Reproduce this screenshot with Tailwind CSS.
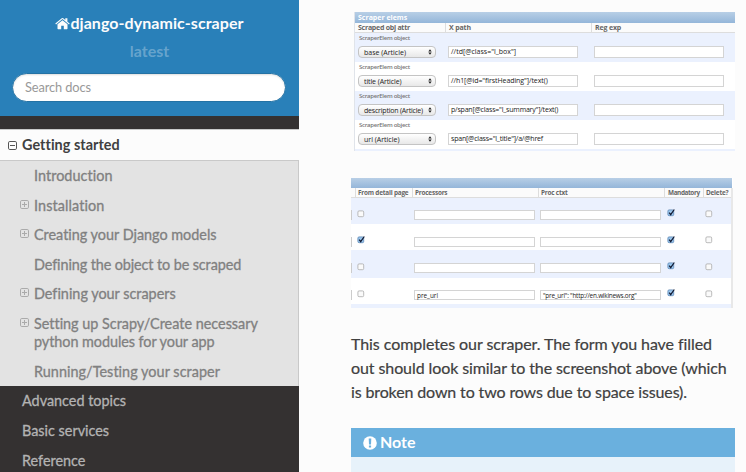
<!DOCTYPE html>
<html lang="en">
<head>
<meta charset="utf-8">
<title>django-dynamic-scraper</title>
<script src="https://cdn.jsdelivr.net/npm/@tailwindcss/browser@4"></script>
</head>
<body class="flex h-[472px] w-[746px] overflow-hidden bg-[#fcfcfc] font-['Lato',sans-serif] text-[#404040] [font-variant-ligatures:none]">
<svg class="hidden">
  <symbol id="plus" viewBox="0 0 9 9"><rect x=".5" y=".5" width="8" height="8" rx="1.3" fill="none" stroke="currentColor"/><path d="M2 4.5H7M4.5 2V7" stroke="currentColor"/></symbol>
  <symbol id="minus" viewBox="0 0 9 9"><rect x=".5" y=".5" width="8" height="8" rx="1.3" fill="none" stroke="currentColor"/><path d="M2 4.5H7" stroke="currentColor"/></symbol>
  <symbol id="box" viewBox="0 0 8 8"><rect x=".9" y=".9" width="5.8" height="5.8" rx="1.2" fill="#fafafa" stroke="#aaa" stroke-width=".8"/></symbol>
  <symbol id="checked" viewBox="0 0 8 8"><rect x=".9" y=".9" width="5.8" height="5.8" rx="1.2" fill="#9cc8ef" stroke="#5c86b4" stroke-width=".8"/><path d="M2.2 3.6L3.7 5.6L7.3 .5" fill="none" stroke="#111a33" stroke-width="1.3"/></symbol>
  <symbol id="arrows" viewBox="0 0 4 6"><path d="M.3 2.4L2 .2L3.7 2.4ZM.3 3.6H3.7L2 5.8Z" fill="#222"/></symbol>
</svg>

<nav class="flex w-[299px] shrink-0 flex-col bg-[#343131]">
  <header class="flex h-[116px] shrink-0 flex-col items-center bg-[#2980b9] pt-[11px]">
    <a class="flex h-[24px] items-center text-[16px] font-bold leading-[24px] text-[#fcfcfc]">
      <svg class="h-[13px] w-[15px]" viewBox="0 0 15 13" fill="#fcfcfc"><path d="M7.5 3.2L2.5 7.3V11.6Q2.5 12.2 3.1 12.2H6.2V8.7H8.8V12.2H11.9Q12.5 12.2 12.5 11.6V7.3Z"/><path d="M.3 6.6L6.8 1.2Q7.5.7 8.2 1.2L10.3 3V1.2H12.4V4.7L14.7 6.6L14 7.4L7.5 2.1L1 7.4Z"/></svg><span class="tracking-[0.06px]">django-dynamic-scraper</span>
    </a>
    <div class="mt-[4px] text-[16px] font-bold leading-[24px] text-white/30">latest</div>
    <div class="mt-[10px] mr-px flex h-[29px] w-[274px] items-center rounded-full border border-[#2472a4] bg-white pl-[12px] text-[12.8px] text-[#999] tracking-[-0.1px] shadow-[inset_0_1px_2px_#ddd]">Search docs</div>
  </header>
  <ul class="mt-[13px] text-[14.4px] leading-[18px] text-[#b3b3b3] [-webkit-text-stroke:0.3px]">
    <li>
      <a class="flex h-[32px] items-center border-y border-[#c9c9c9] bg-[#fcfcfc] pl-[8px] font-bold text-[#404040] [-webkit-text-stroke:0px] tracking-[0.05px]"><svg class="mr-[5px] h-[9px] w-[9px] text-[#555]"><use href="#minus"/></svg>Getting started</a>
      <ul class="border-r border-[#c9c9c9] bg-[#e3e3e3] pt-[0.3px] pr-[30px] pl-[20px] text-[#808080]">
        <li class="py-[5.8px] pl-[14px] tracking-[0.05px]">Introduction</li>
        <li class="flex py-[5.8px] tracking-[0.1px]"><svg class="mt-[3px] mr-[5px] h-[9px] w-[9px] shrink-0 text-[#aaa]"><use href="#plus"/></svg>Installation</li>
        <li class="flex py-[5.8px]"><svg class="mt-[3px] mr-[5px] h-[9px] w-[9px] shrink-0 text-[#aaa]"><use href="#plus"/></svg>Creating your Django models</li>
        <li class="py-[5.8px] pl-[14px] tracking-[-0.1px]">Defining the object to be scraped</li>
        <li class="flex py-[5.8px]"><svg class="mt-[3px] mr-[5px] h-[9px] w-[9px] shrink-0 text-[#aaa]"><use href="#plus"/></svg>Defining your scrapers</li>
        <li class="flex py-[5.8px]"><svg class="mt-[3px] mr-[5px] h-[9px] w-[9px] shrink-0 text-[#aaa]"><use href="#plus"/></svg><span>Setting up Scrapy/Create necessary<br><span class="tracking-[-0.05px]">python modules for your app</span></span></li>
        <li class="h-[29.3px] pt-[5.8px] pl-[14px] tracking-[0.05px]">Running/Testing your scraper</li>
      </ul>
    </li>
    <li class="py-[6px] pl-[22px]">Advanced topics</li>
    <li class="py-[6px] pl-[22px]">Basic services</li>
    <li class="py-[6px] pl-[22px]">Reference</li>
  </ul>
</nav>

<main class="relative grow pl-[52px] pt-[12px]">
  <section class="ml-[3px] h-[139px] w-[381px] border-l border-[#e0e4ea] bg-white font-['Open_Sans',sans-serif] text-[7px] leading-[9px] text-[#222]">
    <h2 class="h-[11px] bg-linear-to-b from-[#b8cfe6] to-[#94b6d9] pl-[3px] font-bold leading-[11px] text-white">Scraper elems</h2>
    <div class="grid h-[10px] grid-cols-[90px_146px_1fr] border-b border-[#ddd] bg-[#fbfbfb] font-bold tracking-[-0.15px] text-[#666]">
      <div class="pl-[3px] leading-[10px] tracking-[-0.25px]">Scraped obj attr</div><div class="border-l border-[#ddd] pl-[3px] leading-[10px]">X path</div><div class="border-l border-[#ddd] pl-[3px] leading-[10px]">Reg exp</div>
    </div>
    <div class="h-[29px] bg-[#ebf1fe]">
      <div class="h-[13px] pt-[1px] pl-[4px] text-[6px] font-semibold tracking-[-0.27px] text-[#777]">ScraperElem object</div>
      <div class="flex"><div class="mr-[12px] ml-[3px] flex h-[12px] w-[78px] items-center justify-between rounded-[4px] border border-[#c4c4c4] bg-linear-to-b from-white to-[#e8e8e8] pr-[3px] pl-[5px]"><span>base (Article)</span><svg class="h-[6px] w-[4px]"><use href="#arrows"/></svg></div><div class="mr-[16px] h-[12px] w-[130px] border border-[#d4d4d4] bg-white pl-[2px]">//td[@class="l_box"]</div><div class="h-[12px] w-[130px] border border-[#d4d4d4] bg-white"></div></div>
    </div>
    <div class="h-[29px]">
      <div class="h-[13px] pt-[1px] pl-[4px] text-[6px] font-semibold tracking-[-0.27px] text-[#777]">ScraperElem object</div>
      <div class="flex"><div class="mr-[12px] ml-[3px] flex h-[12px] w-[78px] items-center justify-between rounded-[4px] border border-[#c4c4c4] bg-linear-to-b from-white to-[#e8e8e8] pr-[3px] pl-[5px]"><span class="tracking-[-0.1px]">title (Article)</span><svg class="h-[6px] w-[4px]"><use href="#arrows"/></svg></div><div class="mr-[16px] h-[12px] w-[130px] border border-[#d4d4d4] bg-white pl-[2px] tracking-[-0.08px]">//h1[@id="firstHeading"]/text()</div><div class="h-[12px] w-[130px] border border-[#d4d4d4] bg-white"></div></div>
    </div>
    <div class="h-[29px] bg-[#ebf1fe]">
      <div class="h-[13px] pt-[1px] pl-[4px] text-[6px] font-semibold tracking-[-0.27px] text-[#777]">ScraperElem object</div>
      <div class="flex"><div class="mr-[12px] ml-[3px] flex h-[12px] w-[78px] items-center justify-between rounded-[4px] border border-[#c4c4c4] bg-linear-to-b from-white to-[#e8e8e8] pr-[3px] pl-[5px]"><span class="whitespace-nowrap tracking-[-0.2px]">description (Article)</span><svg class="h-[6px] w-[4px]"><use href="#arrows"/></svg></div><div class="mr-[16px] h-[12px] w-[130px] border border-[#d4d4d4] bg-white pl-[2px] tracking-[-0.2px]">p/span[@class="l_summary"]/text()</div><div class="h-[12px] w-[130px] border border-[#d4d4d4] bg-white"></div></div>
    </div>
    <div class="h-[29px]">
      <div class="h-[13px] pt-[1px] pl-[4px] text-[6px] font-semibold tracking-[-0.27px] text-[#777]">ScraperElem object</div>
      <div class="flex"><div class="mr-[12px] ml-[3px] flex h-[12px] w-[78px] items-center justify-between rounded-[4px] border border-[#c4c4c4] bg-linear-to-b from-white to-[#e8e8e8] pr-[3px] pl-[5px]"><span>url (Article)</span><svg class="h-[6px] w-[4px]"><use href="#arrows"/></svg></div><div class="mr-[16px] h-[12px] w-[130px] border border-[#d4d4d4] bg-white pl-[2px] tracking-[-0.2px]">span[@class="l_title"]/a/@href</div><div class="h-[12px] w-[130px] border border-[#d4d4d4] bg-white"></div></div>
    </div>
    <div class="h-[2px] bg-[#ebf1fe]"></div>
  </section>

  <section class="mt-[27px] h-[130px] w-[382px] bg-white font-['Open_Sans',sans-serif] text-[6.4px] leading-[10px] text-[#222]">
    <div class="h-[10px] w-[381px] bg-linear-to-b from-[#b8cfe6] to-[#94b6d9]"></div>
    <div class="border-r-2 border-[#e8e8e8]">
      <div class="grid h-[10px] grid-cols-[4px_57px_126px_126px_39px_1fr] border-b border-[#ddd] bg-[#fbfbfb] font-bold tracking-[-0.2px] text-[#666]">
        <div></div><div class="border-l border-[#ddd] pl-[2px] whitespace-nowrap">From detail page</div><div class="border-l border-[#ddd] pl-[2px]">Processors</div><div class="border-l border-[#ddd] pl-[2px]">Proc ctxt</div><div class="border-l border-[#ddd] pl-[3px] tracking-[-0.4px]">Mandatory</div><div class="border-l border-[#ddd] pl-[2px]">Delete?</div>
      </div>
      <div class="flex h-[26px] bg-[#ebf1fe] pt-[11px]"><div class="mt-[1px] h-[10px] w-px bg-[#ccc]"></div><svg class="ml-[5px] mt-[1px] h-[8px] w-[8px]"><use href="#box"/></svg><div class="mt-[1px] ml-[49px] h-[10px] w-[121px] border border-[#d4d4d4] bg-white"></div><div class="mt-[1px] ml-[5px] h-[10px] w-[121px] border border-[#d4d4d4] bg-white"></div><svg class="ml-[6px] h-[8px] w-[8px]"><use href="#checked"/></svg><svg class="ml-[30px] mt-[1px] h-[8px] w-[8px]"><use href="#box"/></svg></div>
      <div class="flex h-[26px] pt-[11px]"><div class="mt-[2px] h-[10px] w-px bg-[#ccc]"></div><svg class="ml-[5px] mt-[1px] h-[8px] w-[8px]"><use href="#checked"/></svg><div class="mt-[2px] ml-[49px] h-[10px] w-[121px] border border-[#d4d4d4] bg-white"></div><div class="mt-[2px] ml-[5px] h-[10px] w-[121px] border border-[#d4d4d4] bg-white"></div><svg class="ml-[6px] mt-[1px] h-[8px] w-[8px]"><use href="#checked"/></svg><svg class="ml-[30px] mt-[1px] h-[8px] w-[8px]"><use href="#box"/></svg></div>
      <div class="flex h-[28px] bg-[#ebf1fe] pt-[12px]"><div class="mt-[1px] h-[10px] w-px bg-[#ccc]"></div><svg class="ml-[5px] mt-[1px] h-[8px] w-[8px]"><use href="#box"/></svg><div class="mt-[1px] ml-[49px] h-[10px] w-[121px] border border-[#d4d4d4] bg-white"></div><div class="mt-[1px] ml-[5px] h-[10px] w-[121px] border border-[#d4d4d4] bg-white"></div><svg class="ml-[6px] h-[8px] w-[8px]"><use href="#checked"/></svg><svg class="ml-[30px] mt-[1px] h-[8px] w-[8px]"><use href="#box"/></svg></div>
      <div class="flex h-[26px] pt-[11px]"><div class="mt-[1px] h-[10px] w-px bg-[#ccc]"></div><svg class="ml-[5px] mt-[1px] h-[8px] w-[8px]"><use href="#box"/></svg><div class="mt-[1px] ml-[49px] h-[10px] w-[121px] border border-[#d4d4d4] bg-white pl-[2px] leading-[9px]">pre_url</div><div class="mt-[1px] ml-[5px] h-[10px] w-[121px] border border-[#d4d4d4] bg-white pl-[2px] leading-[9px] tracking-[-0.22px]">"pre_url": "http://en.wikinews.org"</div><svg class="ml-[6px] h-[8px] w-[8px]"><use href="#checked"/></svg><svg class="ml-[30px] mt-[1px] h-[8px] w-[8px]"><use href="#box"/></svg></div>
      <div class="h-[4px] bg-[#ebf1fe]"></div>
    </div>
  </section>

  <p class="mt-[24px] text-[16px] leading-[24px] whitespace-nowrap [-webkit-text-stroke:0.2px]"><span class="tracking-[-0.07px]">This completes our scraper. The form you have filled</span><br><span class="tracking-[-0.09px]">out should look similar to the screenshot above (which</span><br><span class="tracking-[-0.13px]">is broken down to two rows due to space issues).</span></p>

  <aside class="mt-[24px] h-[44px] w-[384px] bg-[#e7f2fa]">
    <div class="flex h-[29px] items-center bg-[#6ab0de] pb-px pl-[12px] text-[16px] font-bold text-white"><svg class="mt-px mr-[3px] h-[14px] w-[14px]" viewBox="0 0 14 14"><circle cx="7" cy="7" r="6.8" fill="#fff"/><path d="M5.7 2.5H8.3L8 8.4H6ZM5.9 9.4H8.1V11.5H5.9Z" fill="#6ab0de"/></svg>Note</div>
  </aside>
</main>
</body>
</html>
